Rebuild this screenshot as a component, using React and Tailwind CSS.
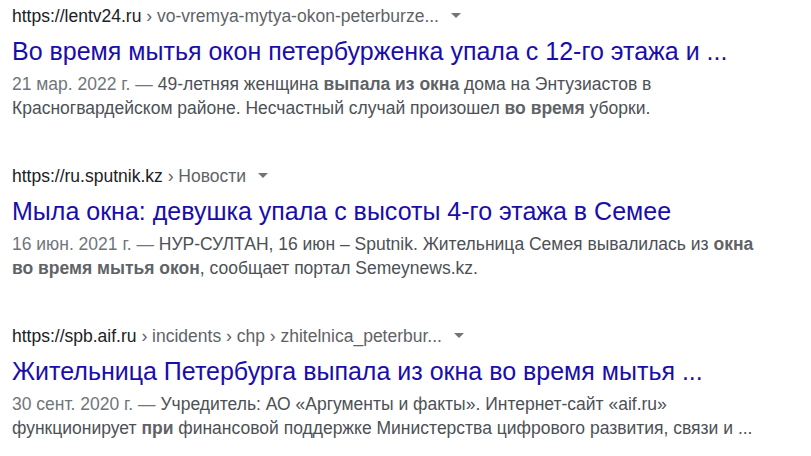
import React from 'react';

const results = [
  {
    domain: 'https://lentv24.ru',
    crumbs: ['vo-vremya-mytya-okon-peterburze...'],
    title: 'Во время мытья окон петербурженка упала с 12-го этажа и ...',
    date: '21 мар. 2022 г.',
    lines: [
      [
        ['49-летняя женщина '],
        ['выпала из окна', true],
        [' дома на Энтузиастов в'],
      ],
      [
        ['Красногвардейском районе. Несчастный случай произошел '],
        ['во время', true],
        [' уборки.'],
      ],
    ],
  },
  {
    domain: 'https://ru.sputnik.kz',
    crumbs: ['Новости'],
    title: 'Мыла окна: девушка упала с высоты 4-го этажа в Семее',
    date: '16 июн. 2021 г.',
    lines: [
      [
        ['НУР-СУЛТАН, 16 июн – Sputnik. Жительница Семея вывалилась из '],
        ['окна', true],
      ],
      [
        ['во время мытья окон', true],
        [', сообщает портал Semeynews.kz.'],
      ],
    ],
  },
  {
    domain: 'https://spb.aif.ru',
    crumbs: ['incidents', 'chp', 'zhitelnica_peterbur...'],
    title: 'Жительница Петербурга выпала из окна во время мытья ...',
    date: '30 сент. 2020 г.',
    lines: [
      [['Учредитель: АО «Аргументы и факты». Интернет-сайт «aif.ru»']],
      [
        ['функционирует '],
        ['при', true],
        [' финансовой поддержке Министерства цифрового развития, связи и ...'],
      ],
    ],
  },
];

const Result = ({ item }) => (
  <div className="flex flex-col">
    <div className="h-[24px] text-[17.5px] leading-[24px] whitespace-nowrap">
      <span className="text-[#202124]">{item.domain}</span>
      <span className="text-[#5f6368]">
        {item.crumbs.map((c) => ` › ${c}`).join('')}
      </span>
      <span className="inline-block align-middle ml-[12px] mb-[3px] w-0 h-0 border-x-[5px] border-x-transparent border-t-[5px] border-t-[#70757a]" />
    </div>
    <div className="mt-[7px] text-[25px] leading-[32px] text-[#1a0dab] whitespace-nowrap">
      {item.title}
    </div>
    <div className="mt-[5px] w-[790px] text-[17.5px] leading-[24px] text-[#4d5156]">
      <span className="text-[#70757a]">{item.date} — </span>
      {item.lines.map((line, i) => (
        <React.Fragment key={i}>
          {i > 0 && <br />}
          {line.map(([t, b], j) =>
            b ? (
              <span key={j} className="font-bold text-[#5f6368]">
                {t}
              </span>
            ) : (
              <span key={j}>{t}</span>
            )
          )}
        </React.Fragment>
      ))}
    </div>
  </div>
);

export default function App() {
  return (
    <div className="w-[811px] h-[456px] overflow-hidden bg-white pl-[12px] pt-[4px] flex flex-col gap-[44px] font-['Liberation_Sans',Arial,sans-serif]">
      {results.map((r) => (
        <Result key={r.domain} item={r} />
      ))}
    </div>
  );
}
